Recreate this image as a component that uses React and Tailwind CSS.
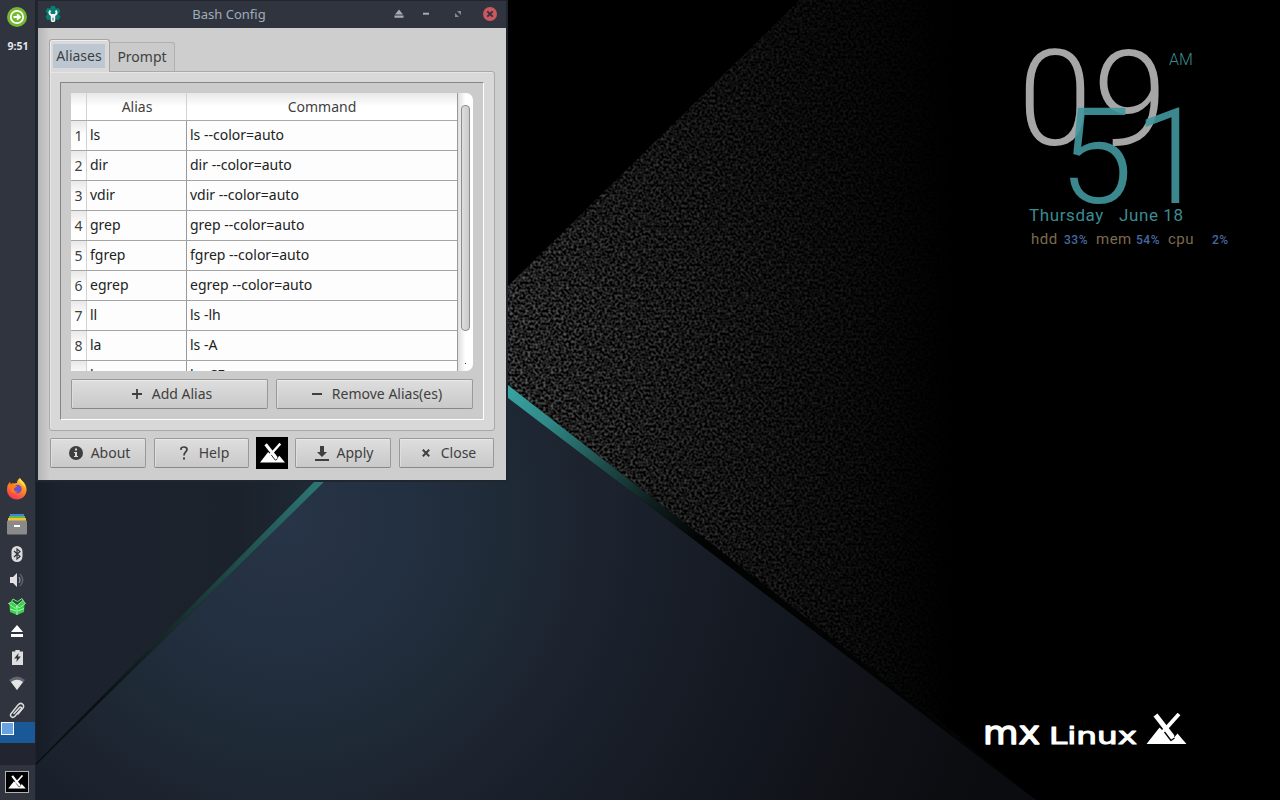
import React from "react";

const aliases = [
  ["ls", "ls --color=auto"],
  ["dir", "dir --color=auto"],
  ["vdir", "vdir --color=auto"],
  ["grep", "grep --color=auto"],
  ["fgrep", "fgrep --color=auto"],
  ["egrep", "egrep --color=auto"],
  ["ll", "ls -lh"],
  ["la", "ls -A"],
  ["l", "ls -CF"],
];

function Wallpaper() {
  return (
    <svg className="absolute inset-0" width="1280" height="800" viewBox="0 0 1280 800">
      <defs>
        <filter id="grain" x="0" y="0" width="100%" height="100%" colorInterpolationFilters="sRGB">
          <feTurbulence type="fractalNoise" baseFrequency="0.39" numOctaves="1" seed="7" />
          <feColorMatrix values="0.85 0 0 0 -0.29  0.85 0 0 0 -0.29  0.85 0 0 0 -0.29  0 0 0 0 1" />
        </filter>
        <linearGradient id="fade" gradientUnits="userSpaceOnUse" x1="500" y1="0" x2="950" y2="0">
          <stop offset="0" stopColor="#000" stopOpacity="0" />
          <stop offset="0.45" stopColor="#000" stopOpacity="0.42" />
          <stop offset="0.8" stopColor="#000" stopOpacity="0.76" />
          <stop offset="1" stopColor="#000" />
        </linearGradient>
        <linearGradient id="topFade" gradientUnits="userSpaceOnUse" x1="0" y1="0" x2="0" y2="400">
          <stop offset="0" stopColor="#000" stopOpacity="0.35" />
          <stop offset="0.8" stopColor="#000" stopOpacity="0" />
        </linearGradient>
        <radialGradient id="blue" gradientUnits="userSpaceOnUse" cx="285" cy="520" r="740">
          <stop offset="0" stopColor="#283447" />
          <stop offset="0.16" stopColor="#233041" />
          <stop offset="0.32" stopColor="#1e2935" />
          <stop offset="0.43" stopColor="#1c222e" />
          <stop offset="0.62" stopColor="#151a23" />
          <stop offset="0.82" stopColor="#101218" />
          <stop offset="1" stopColor="#0b0c10" />
        </radialGradient>
        <linearGradient id="leftPane" gradientUnits="userSpaceOnUse" x1="36" y1="0" x2="330" y2="0">
          <stop offset="0" stopColor="#161d26" />
          <stop offset="0.08" stopColor="#1c232e" />
          <stop offset="0.7" stopColor="#1b222c" />
          <stop offset="1" stopColor="#1e2b35" />
        </linearGradient>
        <linearGradient id="tealRight" gradientUnits="userSpaceOnUse" x1="508" y1="390" x2="700" y2="540">
          <stop offset="0" stopColor="#38a3a1" />
          <stop offset="0.2" stopColor="#318a89" />
          <stop offset="0.5" stopColor="#1f4c4a" />
          <stop offset="0.75" stopColor="#0f1e1d" />
          <stop offset="1" stopColor="#020303" />
        </linearGradient>
        <linearGradient id="tealLeft" gradientUnits="userSpaceOnUse" x1="320" y1="482" x2="100" y2="700">
          <stop offset="0" stopColor="#2b7775" />
          <stop offset="0.35" stopColor="#224f4d" />
          <stop offset="0.65" stopColor="#172e2c" />
          <stop offset="1" stopColor="#0a1012" />
        </linearGradient>
        <clipPath id="wedge"><path d="M508 286 L800 0 L960 0 L960 738 L508 385 Z" /></clipPath>
      </defs>
      <rect width="1280" height="800" fill="#000" />
      <g clipPath="url(#wedge)">
        <rect x="500" y="0" width="460" height="740" filter="url(#grain)" />
        <rect x="500" y="0" width="460" height="740" fill="url(#fade)" />
        <rect x="500" y="0" width="460" height="740" fill="url(#topFade)" />
      </g>
      <path d="M36 480 H330 L36 768 Z" fill="url(#leftPane)" />
      <path d="M36 766 L328 478 H508 V398 L1036 800 H36 Z" fill="url(#blue)" />
      <path d="M506 383.500 L508 385 L960 738 L1036 800 L506 396.500 Z" fill="url(#tealRight)" />
      <path d="M320 476 L36 763 V765 L330 476 Z" fill="url(#tealLeft)" />
    </svg>
  );
}

function MxMark({ className }) {
  return (
    <svg className={className} viewBox="0 0 40 32" fill="#fff">
      <path d="M0 31 L13 14.500 L17 18.500 L24 18 L28 24 L31 20.500 L40 31 Z" />
      <path d="M32.500 1 L15.500 20" stroke="#fff" strokeWidth="3.800" />
      <path d="M9 2 L26 24" stroke="#fff" strokeWidth="5" />
      <path d="M18 19 L24.500 27.500 L28 25" fill="none" stroke="#000" strokeWidth="1.300" />
    </svg>
  );
}

function Dock() {
  return (
    <aside className="absolute left-0 top-0 flex h-[800px] w-[36px] flex-col items-center border-r border-[#1e222b] bg-[#2f343f] pr-px">
      <svg className="mt-[7px] h-5 w-5 shrink-0" viewBox="0 0 20 20">
        <circle cx="10" cy="10" r="10" fill="#76b82f" />
        <circle cx="10" cy="10" r="6.2" fill="none" stroke="#fff" strokeWidth="1.7" />
        <path d="M6.5 10h6M10 7.300l3 2.700-3 2.700" fill="none" stroke="#fff" strokeWidth="1.8" />
      </svg>
      <div className="mt-[12px] ml-[2px] h-[14px] text-[10.5px] font-bold leading-[14px] text-[#e4e6ea]">9:51</div>
      <div className="h-[425px] shrink-0" />
      {/* Firefox */}
      <svg className="h-[22px] w-[22px] shrink-0" viewBox="0 0 22 22">
        <defs>
          <linearGradient id="fox" x1="0.8" y1="0" x2="0.3" y2="1">
            <stop offset="0" stopColor="#ffde3c" />
            <stop offset="0.45" stopColor="#ff8b20" />
            <stop offset="1" stopColor="#f5315c" />
          </linearGradient>
        </defs>
        <path d="M14 0c1 2 4 4 5 6 4 7 0 15-8 15.500C5 21.500 1 17 1 11.500 1 8 2 6 4 4v3c1-1 2-2 4-1.500L11 5C11 3 12 1 14 0Z" fill="url(#fox)" />
        <circle cx="11.500" cy="11" r="4.200" fill="#6a50ce" />
        <path d="M1.500 8L4.500 4v3c2-1 4 0 6.500 1-.2 1.600-3 1.300-3 3 0 2 2 3 4 2-2 3-7 2-8-1.500Z" fill="#ff7b1d" />
        <path d="M14 .5c1.500 3 5 4 5 9-1-2-2.500-3-4-4.500-1.500-1-2-3-1-4.500Z" fill="#ffe24b" />
      </svg>
      {/* file manager */}
      <svg className="mt-[14px] h-[21px] w-[20px] shrink-0" viewBox="0 0 20 21">
        <path d="M3 0h14v3H3z" fill="#3d86d8" /><path d="M2 2h16v3H2z" fill="#62b84a" /><path d="M1 4h18v4H1z" fill="#f5bd3a" />
        <rect y="6.500" width="20" height="14" rx="1" fill="#8a8a8a" /><path d="M7 11h6v2H7z" fill="#fff" />
      </svg>
      {/* bluetooth */}
      <svg className="mt-[11px] h-[16px] w-[12px] shrink-0" viewBox="0 0 12 16">
        <rect x=".5" width="11" height="16" rx="5.500" fill="#dcdcdc" />
        <path d="M3 5l6 5.500L6 13V3l3 2.500L3 11" fill="none" stroke="#2f343f" strokeWidth="1.200" />
      </svg>
      {/* volume */}
      <svg className="mt-[10px] h-[16px] w-[16px] shrink-0" viewBox="0 0 16 16">
        <path d="M1 5h3l4-4v14l-4-4H1z" fill="#e0e0e0" />
        <path d="M10 5q2 3 0 6" fill="none" stroke="#8d9199" strokeWidth="1.300" />
        <path d="M11 2q5.500 6 0 12" fill="none" stroke="#5b606a" strokeWidth="1.500" />
      </svg>
      {/* package */}
      <svg className="mt-[10px] h-[17px] w-[18px] shrink-0" viewBox="0 0 18 17">
        <path d="M1.500 6.500L9 8.500V17l-7-3zM16.500 6.500L9 8.500V17l7-3z" fill="#36d24a" />
        <path d="M3.500 4.500L5 1l4.500 2.500L14 0l2 3.500L9 7z" fill="#1c5f30" />
        <path d="M.5 5.500L4 3.500l5 4-1.500 3zM17.500 5.500L15 2.500 9 7.500l2 2.500z" fill="#36d24a" stroke="#c2f5c6" strokeWidth=".8" />
        <path d="M3.500 3.500L5 1l4.500 2.500L14 .5l1.500 2.500" fill="none" stroke="#7be488" strokeWidth="1" />
        <path d="M9 8v9M2 11l6 2M10 13l6-2.500" stroke="#d6ffda" strokeWidth=".8" />
      </svg>
      {/* eject */}
      <svg className="mt-[10px] h-[12px] w-[14px] shrink-0" viewBox="0 0 14 12" fill="#fff"><path d="M7 0l6 7H1zM1 9h12v3H1z" /></svg>
      {/* battery */}
      <svg className="mt-[13px] h-[15px] w-[11px] shrink-0" viewBox="0 0 10 15" preserveAspectRatio="none">
        <path d="M3 0h4v1.500h3V15H0V1.500h3z" fill="#dedede" /><path d="M6 3L2 8.500h2.500L4 12l4-5.500H5.500z" fill="#2f343f" />
      </svg>
      {/* wireless */}
      <svg className="mt-[11px] h-[15px] w-[16px] shrink-0" viewBox="0 0 16 15">
        <path d="M0 4q8-7 16 0L8 14z" fill="#62666f" /><path d="M2 6q6-4.500 12 0L8 14z" fill="#e5e5e5" />
      </svg>
      {/* clipboard manager */}
      <svg className="mt-[11px] h-[17px] w-[16px] shrink-0" viewBox="0 0 16 17" fill="none" stroke="#dedede" strokeWidth="1.500" strokeLinecap="round">
        <path d="M5 11.500l5.500-6c1-1.200 2.700.2 1.700 1.500l-6.500 7.500c-2.200 2.200-5.500-.5-3.500-3L9 3c3-3.500 7.500-.2 4.800 3.300L9 12" />
      </svg>
      {/* workspace switcher */}
      <div className="mt-[3px] flex h-[21px] w-[35px] shrink-0 bg-[#1b5898]">
        <div className="ml-px h-[13px] w-[13px] border border-white bg-[#69a2e3]" />
      </div>
      <div className="h-[22px] w-[35px] shrink-0 bg-[#22252f]" />
      <div className="mt-[6px] flex h-[22px] w-[24px] shrink-0 items-center justify-center border border-[#b3b3b3] bg-black">
        <MxMark className="h-[14px] w-[18px]" />
      </div>
    </aside>
  );
}

const buttonFace =
  "flex h-[30px] items-center justify-center whitespace-nowrap rounded-[2px] border border-[#999] border-b-[#888] bg-linear-to-b from-[#dedede] to-[#c9c9c9] shadow-[inset_0_1px_0_#e9e9e9,inset_1px_0_0_#dedede] text-[#3f3f3f]";

function Button({ icon, children, className }) {
  return (
    <button className={`${buttonFace} ${className}`}>
      {icon}
      <span className="pb-px leading-[19px]">{children}</span>
    </button>
  );
}

const icons = {
  add: <svg className="ml-[5px] mr-[10px] h-[10px] w-[10px]" viewBox="0 0 10 10"><path d="M5 0v10M0 5h10" stroke="#3f3f3f" strokeWidth="1.800" /></svg>,
  remove: <svg className="ml-[5px] mr-[10px] h-[10px] w-[10px]" viewBox="0 0 10 10"><path d="M0 5h10" stroke="#3f3f3f" strokeWidth="2" /></svg>,
  about: <svg className="ml-[3px] mr-[8px] h-[14px] w-[14px]" viewBox="0 0 14 14"><circle cx="7" cy="7" r="7" fill="#3f3f3f" /><path d="M6 2.500h2v2H6zM5 6h3v4h1v1H5v-1h1V7H5z" fill="#ddd" /></svg>,
  help: <svg className="ml-[6px] mr-[11px] h-[14px] w-[8px]" viewBox="0 0 8 14"><path d="M1 4V3q0-2 3-2t3 2.500C7 6 4 6 4 9.500" fill="none" stroke="#3f3f3f" strokeWidth="1.700" /><path d="M3 11.500h2v2H3z" fill="#3f3f3f" /></svg>,
  apply: <svg className="ml-[2px] mr-[8px] h-[15px] w-[14px]" viewBox="0 0 14 15" fill="#3f3f3f"><path d="M5 0h4v6h3l-5 5-5-5h3zM0 13h14v2H0z" /></svg>,
  close: <svg className="ml-[5px] mr-[11px] h-[8px] w-[8px]" viewBox="0 0 8 8"><path d="M.8.8l6.400 6.400M7.200.8L.8 7.200" stroke="#3f3f3f" strokeWidth="2" /></svg>,
};

function TitleBar() {
  return (
    <header className="flex h-[28px] shrink-0 items-center border-t border-[#20242d] bg-[#2f343f] pb-px text-[#a3acba]">
      <svg className="ml-[7px] h-[16px] w-[16px]" viewBox="0 0 16 16">
        <path d="M6 0h4l.7 2.500L13.500 2l2 3.300-2 2.700 2 2.700-2 3.300-2.800-.5L10 16H6l-.7-2.500-2.800.5-2-3.300 2-2.700-2-2.700 2-3.300 2.800.5z" fill="#087d72" />
        <path d="M5.300 4.500C3.500 7 5 8.500 6.800 9.500V14a1.200 1.200 0 0 0 2.400 0V9.500C11 8.500 12.500 7 10.700 4.500" fill="none" stroke="#f5f5f5" strokeWidth="2" />
        <path d="M5.500 8h5L9.500 11h-3z" fill="#f5f5f5" /><path d="M7 12h2v2.500H7z" fill="#a5a5a5" />
      </svg>
      <div className="w-[336px] text-center text-[13px] leading-[18px]">Bash Config</div>
      <svg className="-ml-[3px] h-[16px] w-[104px]" viewBox="0 0 104 16">
        <path d="M5 3.500L9 8.500H1zM.5 9.500h9v2.300h-9z" fill="#a3acba" />
        <path d="M29 7.700h6" stroke="#a3acba" strokeWidth="2" />
        <path d="M63 5h4v4zM61 7v4h4z" fill="#848c99" />
        <circle cx="96" cy="8" r="7" fill="#cc575d" />
        <path d="M93.300 5.300l5.400 5.400M98.700 5.300l-5.400 5.400" stroke="#2f343f" strokeWidth="1.900" />
      </svg>
    </header>
  );
}

function AliasTable() {
  return (
    <div className="flex h-[278px] w-[402px] overflow-hidden text-[#222]">
      <div className="w-[387px] overflow-hidden border-r border-[#999] bg-[#fdfdfd]">
        <div className="flex h-[28px] border-b border-[#a9a9a9] bg-linear-to-b from-[#e8e8e8] to-white to-50% text-center leading-[27px] text-[#3f3f3f]">
          <div className="w-[16px] border-r border-[#d2d2d2]" />
          <div className="w-[100px] border-r border-[#d2d2d2] pl-px">Alias</div>
          <div className="flex-1">Command</div>
        </div>
        {aliases.map(([name, command], i) => (
          <div key={name} className="flex h-[30px] border-b border-[#a5a5a5] leading-[27px]">
            <div className="w-[16px] border-r border-[#d2d2d2] bg-linear-to-b from-[#e8e8e8] to-white to-50% text-center leading-[29px] text-[#3f3f3f]">{i + 1 < 9 ? i + 1 : ""}</div>
            <div className="w-[100px] border-r border-[#999] pl-[3px]">{name}</div>
            <div className="flex-1 pl-[3px]">{command}</div>
          </div>
        ))}
      </div>
      <div className="flex w-[15px] flex-col items-center rounded-r-[7px] bg-linear-to-r from-[#dedede] to-white to-50% pt-[12px]">
        <div className="h-[226px] w-[9px] rounded-[4px] border border-[#8d8d8d] bg-linear-to-r from-[#dedede] to-[#cacaca]" />
        <div className="mt-[32px] h-px w-px bg-[#333]" />
      </div>
    </div>
  );
}

function ConfigWindow() {
  return (
    <main className="absolute left-[36px] top-0 flex h-[482px] w-[472px] flex-col border-r-2 border-b-2 border-l-2 border-[#20262f] bg-[#cecece] text-[14px]">
      <TitleBar />
      <div className="flex-1 bg-linear-to-r from-[#b6b6b6] to-[#cecece] to-[12px] pl-[11px] pt-[11px]">
        <nav className="relative z-10 flex h-[33px] items-end text-[#3f3f3f]">
          <div className="flex h-[33px] w-[61px] justify-center rounded-t-[3px] border border-b-0 border-[#a5a5a5] bg-[#d9d9d9] pr-px pt-[4px] shadow-[inset_1px_1px_0_#eee]">
            <span className="flex h-[24px] w-[52px] items-center justify-center bg-[#bdc7d2] pb-px leading-[23px]">Aliases</span>
          </div>
          <div className="mb-px h-[29px] w-[65px] rounded-tr-[3px] border border-b-0 border-l-0 border-[#b0b0b0] bg-[#cacaca] text-center leading-[28px]">Prompt</div>
        </nav>
        <section className="-mt-px h-[360px] w-[446px] rounded-b-[3px] rounded-tr-[3px] border border-[#a9a9a9] bg-[#d8d8d8] px-[10px] pt-[10px] shadow-[inset_1px_1px_0_#e5e5e5]">
          <div className="h-[338px] w-[424px] border border-t-[#858585] border-r-white border-b-white border-l-[#858585] bg-[#cbcbcb] pl-[10px] pt-[10px]">
            <AliasTable />
            <div className="mt-[8px] flex gap-[8px]">
              <Button icon={icons.add} className="w-[197px]">Add Alias</Button>
              <Button icon={icons.remove} className="w-[197px]">Remove Alias(es)</Button>
            </div>
          </div>
        </section>
        <footer className="mt-[6px] ml-px flex h-[32px] items-center">
          <Button icon={icons.about} className="w-[96px]">About</Button>
          <Button icon={icons.help} className="ml-[8px] w-[95px]">Help</Button>
          <div className="ml-[7px] flex h-[32px] w-[32px] items-center justify-center bg-black"><MxMark className="h-[20px] w-[25px]" /></div>
          <Button icon={icons.apply} className="ml-[7px] w-[96px]">Apply</Button>
          <Button icon={icons.close} className="ml-[8px] w-[95px]">Close</Button>
        </footer>
      </div>
    </main>
  );
}

function DesktopClock() {
  return (
    <div className="font-['Roboto',sans-serif] whitespace-nowrap leading-none text-[#3c8b92]">
      <div className="absolute left-[1018px] top-[33px] text-[133.5px] font-light tracking-[1px] text-[#a6a6a6]">09</div>
      <div className="absolute left-[1059px] top-[91px] text-[133.5px] font-light tracking-[1px] text-[#41979d]/90">51</div>
      <div className="absolute left-[1169px] top-[52px] text-[16px] font-light">AM</div>
      <div className="absolute left-[1029px] top-[207px] flex gap-[15px] text-[17px] leading-[17px] tracking-[0.6px]">
        <span>Thursday</span><span>June 18</span>
      </div>
      <div className="absolute left-[1031px] top-[232px] flex items-baseline text-[15px] tracking-[0.5px] text-[#7c6b4e]">
        <span className="w-[33px]">hdd</span><span className="w-[32px] text-[12px] font-medium text-[#4869a5]">33%</span>
        <span className="w-[40px]">mem</span><span className="w-[32px] text-[12px] font-medium text-[#4869a5]">54%</span>
        <span className="w-[44px]">cpu</span><span className="text-[12px] font-medium text-[#4869a5]">2%</span>
      </div>
    </div>
  );
}

function Brand() {
  return (
    <svg className="absolute left-[980px] top-[708px]" width="212" height="42" viewBox="0 0 212 42" fill="#fff" stroke="#fff" strokeWidth="1.4" strokeLinejoin="round" fontFamily="'DejaVu Sans', sans-serif">
      <text x="3" y="35.500" fontSize="32" textLength="57" lengthAdjust="spacingAndGlyphs">mx</text>
      <text x="69" y="35.500" fontSize="22.500" strokeWidth="1" textLength="88" lengthAdjust="spacingAndGlyphs">Linux</text>
      <svg x="166" y="5" width="41" height="32" stroke="none"><MxMark /></svg>
    </svg>
  );
}

export default function App() {
  return (
    <div className="relative h-[800px] w-[1280px] overflow-hidden bg-black font-['Noto_Sans',sans-serif]">
      <Wallpaper />
      <DesktopClock />
      <Brand />
      <ConfigWindow />
      <Dock />
    </div>
  );
}
